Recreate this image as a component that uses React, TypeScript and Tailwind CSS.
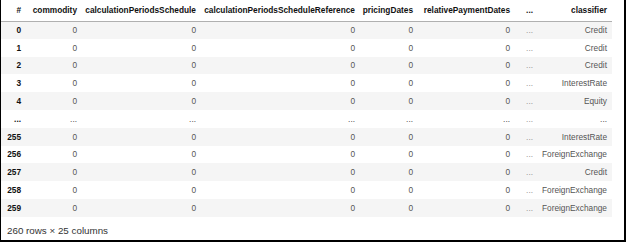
import React from "react";

const cols = [
  { name: "commodity", w: "w-[56px]" },
  { name: "calculationPeriodsSchedule", w: "w-[119px]" },
  { name: "calculationPeriodsScheduleReference", w: "w-[159px]" },
  { name: "pricingDates", w: "w-[58px]" },
  { name: "relativePaymentDates", w: "w-[97px]" },
  { name: "...", w: "w-[23px]" },
  { name: "classifier", w: "w-[74px]" },
];

const rows: [string, string][] = [
  ["0", "Credit"],
  ["1", "Credit"],
  ["2", "Credit"],
  ["3", "InterestRate"],
  ["4", "Equity"],
  ["...", "..."],
  ["255", "InterestRate"],
  ["256", "ForeignExchange"],
  ["257", "Credit"],
  ["258", "ForeignExchange"],
  ["259", "ForeignExchange"],
];

export default function App() {
  return (
    <div
      className="w-[626px] h-[242px] bg-white border-l border-r-2 border-b-2 border-black overflow-hidden flex flex-col"
      style={{ fontFamily: '"Liberation Sans", Arial, sans-serif' }}
    >
      <table className="table-fixed border-collapse w-[611px] text-[8.3px] leading-none">
        <thead>
          <tr className="h-[21px] border-b border-[#b0b0b0]">
            <th className="w-[25px] text-right pr-[5px] font-bold text-[#111]">#</th>
            {cols.map((c) => (
              <th key={c.name} className={`${c.w} text-right pr-[5px] font-bold text-[#111] whitespace-nowrap`}>
                {c.name}
              </th>
            ))}
          </tr>
        </thead>
        <tbody>
          {rows.map(([idx, cls], i) => {
            const dots = idx === "...";
            const v = dots ? "..." : "0";
            return (
              <tr key={idx} className={`h-[17.8px] ${i % 2 === 0 ? "bg-[#f5f5f5]" : "bg-white"}`}>
                <td className="text-right pr-[5px] font-bold text-[#111]">{idx}</td>
                <td className="text-right pr-[5px] text-[#555]">{v}</td>
                <td className="text-right pr-[5px] text-[#555]">{v}</td>
                <td className="text-right pr-[5px] text-[#555]">{v}</td>
                <td className="text-right pr-[5px] text-[#555]">{v}</td>
                <td className="text-right pr-[5px] text-[#555]">{v}</td>
                <td className="text-right pr-[5px] text-[#999]">...</td>
                <td className="text-right pr-[5px] text-[#555] whitespace-nowrap">{cls}</td>
              </tr>
            );
          })}
        </tbody>
      </table>
      <div className="pl-[6px] pt-[9px] text-[9.8px] text-[#333] leading-none">260 rows × 25 columns</div>
    </div>
  );
}
